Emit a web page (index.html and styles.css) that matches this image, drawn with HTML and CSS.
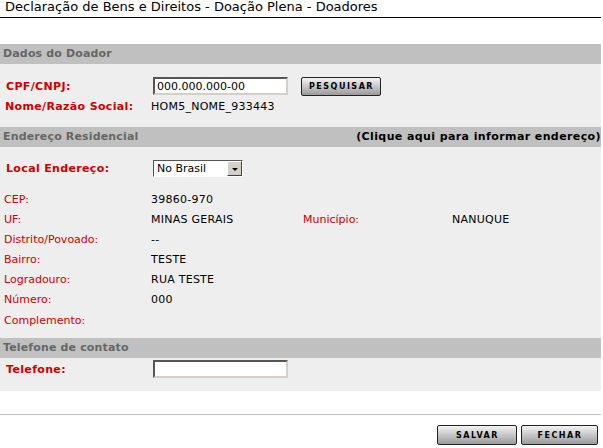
FILE: index.html
```html
<!DOCTYPE html>
<html lang="pt">
<head>
<meta charset="utf-8">
<link rel="stylesheet" href="styles.css">
</head>
<body>
<div class="page">
  <div class="title">Declaração de Bens e Direitos - Doação Plena - Doadores</div>

  <div class="bar first">Dados do Doador</div>
  <div class="section s1">
    <div class="row r-cpf">
      <span class="lbl b">CPF/CNPJ:</span>
      <span class="val"><input class="txt" type="text" value="000.000.000-00"></span>
      <button class="btn pesq" type="button">PESQUISAR</button>
    </div>
    <div class="row">
      <span class="lbl b nome">Nome/Razão Social:</span>
      <span class="val">HOM5_NOME_933443</span>
    </div>
  </div>

  <div class="bar"><span>Endereço Residencial</span><span class="link">(Clique aqui para informar endereço)</span></div>
  <div class="section s2">
    <div class="row r-local">
      <span class="lbl b">Local Endereço:</span>
      <span class="val"><span class="select"><span class="opt">No Brasil</span><span class="arrow"></span></span></span>
    </div>
    <div class="list">
      <div class="row"><span class="lbl n">CEP:</span><span class="val">39860-970</span></div>
      <div class="row"><span class="lbl n">UF:</span><span class="val">MINAS GERAIS</span><span class="lbl n mun">Município:</span><span class="val">NANUQUE</span></div>
      <div class="row"><span class="lbl n">Distrito/Povoado:</span><span class="val">--</span></div>
      <div class="row"><span class="lbl n">Bairro:</span><span class="val">TESTE</span></div>
      <div class="row"><span class="lbl n">Logradouro:</span><span class="val">RUA TESTE</span></div>
      <div class="row"><span class="lbl n">Número:</span><span class="val">000</span></div>
      <div class="row"><span class="lbl n">Complemento:</span><span class="val"></span></div>
    </div>
  </div>

  <div class="bar">Telefone de contato</div>
  <div class="section s3">
    <div class="row r-tel">
      <span class="lbl b">Telefone:</span>
      <span class="val"><input class="txt" type="text" value=""></span>
    </div>
  </div>

  <div class="footer">
    <button class="btn big salvar" type="button">SALVAR</button>
    <button class="btn big fechar" type="button">FECHAR</button>
  </div>
</div>
</body>
</html>
```
FILE: styles.css
```css
html, body { margin: 0; padding: 0; background: #fff; }
body { font-family: "DejaVu Sans", Verdana, sans-serif; font-size: 11px; color: #000; }
.page { width: 601px; }

.title {
  height: 18px;
  line-height: 13px;
  padding: 0 0 0 5px;
  font-size: 13px;
  border-bottom: 1px solid #000;
  box-sizing: border-box;
  margin-bottom: 26px;
}

.bar {
  height: 20px;
  line-height: 20px;
  background: #c0c0c0;
  color: #666;
  font-weight: bold;
  padding-left: 3px;
  display: flex;
  justify-content: space-between;
  letter-spacing: 0.15px;
}
.bar .link { color: #000; letter-spacing: 0.4px; }

.section { background: #eee; }
.s1 { padding: 12px 0 11px; }
.s2 { padding: 10px 0 8px; }
.s3 { padding: 2px 0 13px; }

.row { display: flex; align-items: center; height: 20px; }
.lbl { width: 151px; flex: none; color: #cc0000; }
.lbl.b { font-weight: bold; padding-left: 6px; width: 145px; letter-spacing: 0.35px; }
.lbl.b.nome { padding-left: 5px; width: 146px; }
.lbl.n { padding-left: 4px; width: 147px; }
.lbl.mun { width: 149px; padding-left: 0; }
.val { width: 152px; flex: none; letter-spacing: 0.25px; }

.txt {
  box-sizing: border-box;
  width: 135px;
  height: 18px;
  margin: 0 0 0 2px;
  padding: 0 2px;
  font-family: "DejaVu Sans", Verdana, sans-serif;
  font-size: 11px;
  color: #000;
  background: #fff;
  border: 2px solid;
  border-color: #555 #d4d0c8 #d4d0c8 #555;
  outline: none;
}

.r-cpf .val { width: 150px; }
.r-local { height: 22px; margin-bottom: 10px; }
.r-tel { height: 18px; }

.select {
  box-sizing: border-box;
  display: flex;
  width: 90px;
  height: 17px;
  margin-left: 2px;
  background: #fff;
  border: 1px solid #fff;
  border-color: #555 #fff #fff #555;
  letter-spacing: 0;
}
.select .opt { flex: 1; line-height: 15px; padding-left: 3px; }
.select .arrow {
  width: 15px;
  height: 15px;
  box-sizing: border-box;
  background: #d4d0c8;
  border: 1px solid;
  border-color: #fff #404040 #404040 #fff;
  position: relative;
}
.select .arrow::after {
  content: "";
  position: absolute;
  left: 4px;
  top: 6px;
  border-left: 3px solid transparent;
  border-right: 3px solid transparent;
  border-top: 3px solid #000;
}

.list .row:last-child { margin-top: 1px; }

.btn {
  box-sizing: border-box;
  height: 20px;
  border: 1px solid #222;
  border-radius: 2px;
  background: linear-gradient(#f4f4f4, #9a9a9a);
  font-family: "DejaVu Sans", Verdana, sans-serif;
  font-size: 8px;
  font-weight: bold;
  letter-spacing: 1.5px;
  color: #000;
  padding: 0 0 0 1px;
  cursor: pointer;
}
.pesq { width: 80px; height: 19px; }

.footer {
  margin-top: 23px;
  border-top: 1px solid #c0c0c0;
  padding-top: 10px;
  display: flex;
  justify-content: flex-end;
  gap: 4px;
  padding-right: 3px;
}
.salvar { width: 80px; }
.fechar { width: 77px; }
```
